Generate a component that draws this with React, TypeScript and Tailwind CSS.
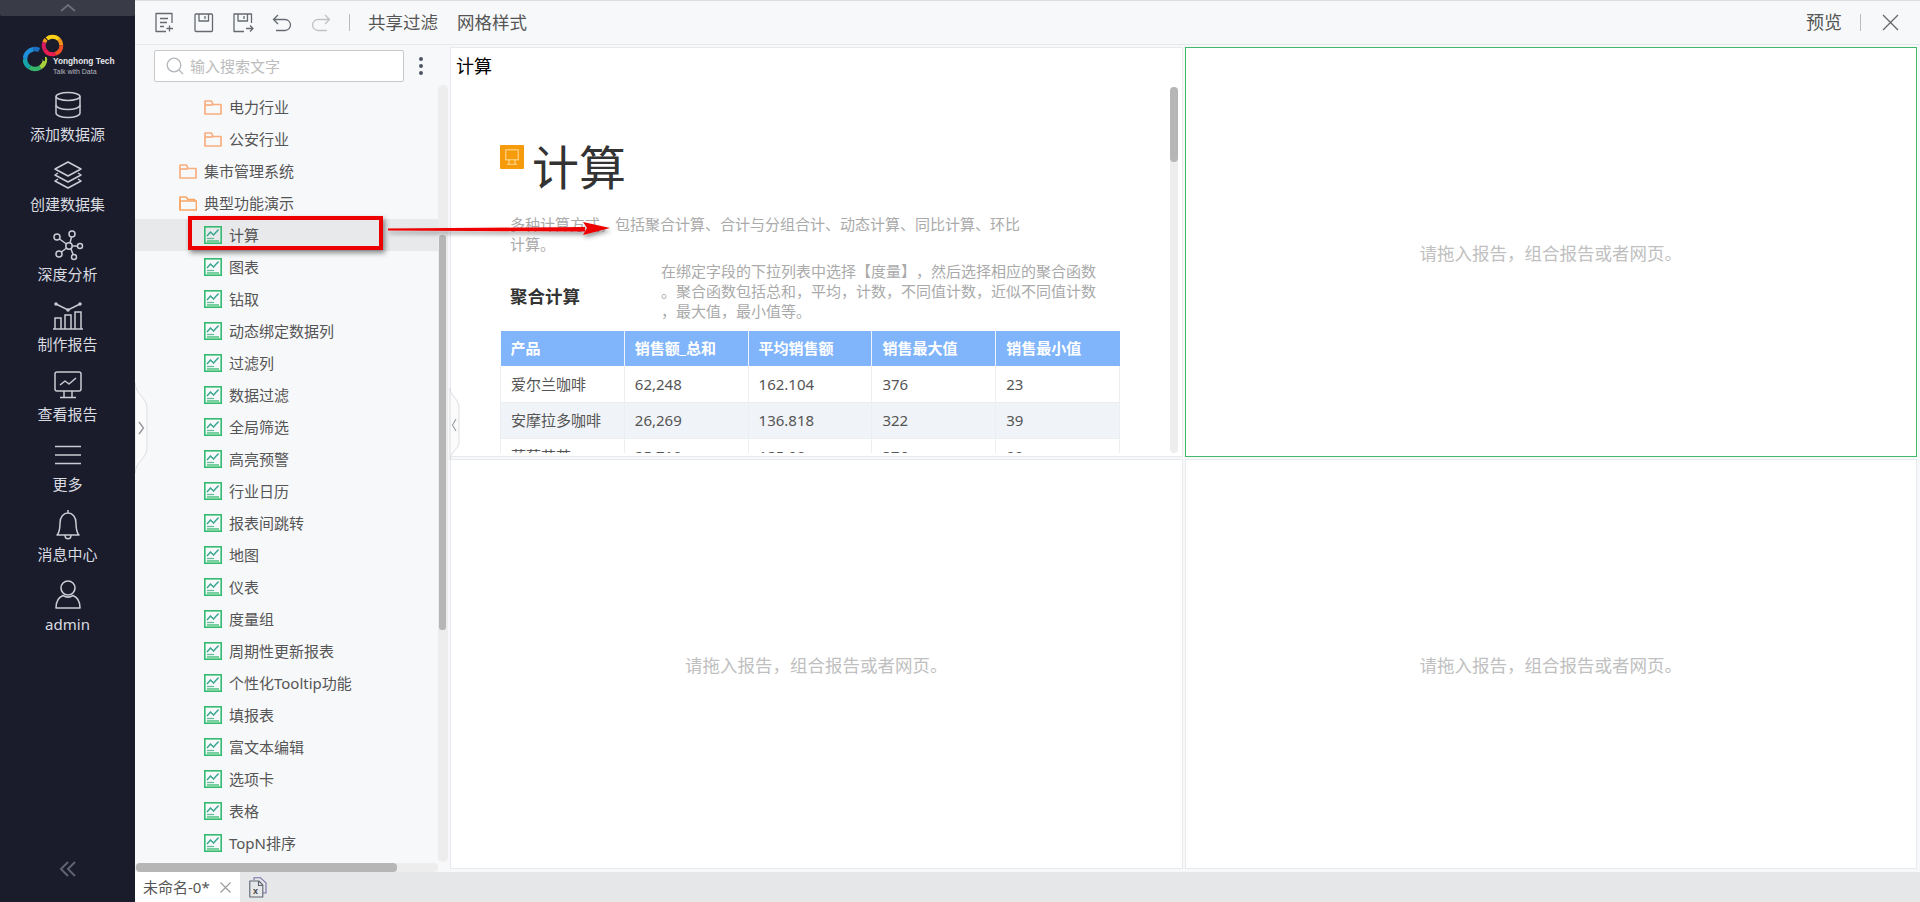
import React from "react";

const S = ({ w, h, children, className = "" }: { w: number; h: number; children: React.ReactNode; className?: string }) => (
  <svg width={w} height={h} viewBox={`0 0 ${w} ${h}`} fill="none" className={className}>
    {children}
  </svg>
);

const Logo = () => {
  const ring = (cx: number, cy: number, r: number, sw: number, segs: [string, number, number][]) =>
    segs.map(([c, start, len], i) => (
      <circle
        key={i}
        cx={cx}
        cy={cy}
        r={r}
        stroke={c}
        strokeWidth={sw}
        pathLength={100}
        strokeDasharray={`${len} ${100 - len}`}
        strokeDashoffset={-start}
      />
    ));
  return (
    <S w={42} h={40} className="shrink-0">
      {ring(12, 25, 10, 4.5, [
        ["#a6d13a", 0, 16],
        ["#35b56a", 16, 18],
        ["#16a5a8", 34, 16],
        ["#1e8fd8", 50, 22],
        ["#1c6fc0", 72, 10],
      ])}
      {ring(29.5, 11.5, 8.8, 4, [
        ["#f7941d", 88, 12],
        ["#f04e23", 0, 20],
        ["#ed1c4e", 20, 22],
        ["#d81b60", 42, 14],
        ["#f59a1c", 56, 6],
        ["#fbd016", 64, 24],
      ])}
    </S>
  );
};

const navStroke = "#c9ccd4";
const navIcons: Record<string, React.ReactNode> = {
  db: (
    <S w={34} h={34}>
      <g stroke={navStroke} strokeWidth="1.5">
        <ellipse cx="17" cy="8.500" rx="12" ry="4" />
        <path d="M5 8.500v16.500c0 2.500 5.400 4.500 12 4.500s12-2 12-4.500V8.500" />
        <path d="M5 17c0 2.500 5.400 4.500 12 4.500s12-2 12-4.500" />
      </g>
    </S>
  ),
  layers: (
    <S w={34} h={34}>
      <g stroke={navStroke} strokeWidth="1.5" strokeLinejoin="round">
        <path d="M17 4l13 7-13 7-13-7z" />
        <path d="M7 15l-3 2 13 7 13-7-3-2" />
        <path d="M7 21l-3 2 13 7 13-7-3-2" />
      </g>
    </S>
  ),
  graph: (
    <S w={34} h={34}>
      <g stroke={navStroke} strokeWidth="1.5">
        <circle cx="6" cy="9" r="3" />
        <circle cx="21" cy="6" r="3" />
        <circle cx="29" cy="18" r="2.5" />
        <circle cx="8" cy="26" r="3" />
        <circle cx="23" cy="29" r="2.5" />
        <circle cx="18" cy="18" r="3.2" />
        <path d="M8.5 11l7 5M20.5 9l-1.5 6M21.2 18h5.3M10.300 24l5.400-4M20 21l2.200 5.800" />
      </g>
    </S>
  ),
  report: (
    <S w={34} h={34}>
      <g stroke={navStroke} strokeWidth="1.5">
        <path d="M5 6l12 6 12-6" />
        <circle cx="5" cy="6" r="1" fill={navStroke} />
        <circle cx="17" cy="12" r="1" fill={navStroke} />
        <circle cx="29" cy="6" r="1" fill={navStroke} />
        <path d="M4 31V20h6v11M14 31V17h6v14M24 31V14h6v17M2 31h30" />
      </g>
    </S>
  ),
  monitor: (
    <S w={34} h={34}>
      <g stroke={navStroke} strokeWidth="1.5" strokeLinejoin="round">
        <rect x="4" y="4" width="26" height="19" rx="2" />
        <path d="M9 17l5-4 4 3 7-6" />
        <path d="M13 23v6M21 23v6M9 29.500h16" />
      </g>
    </S>
  ),
  menu: (
    <S w={34} h={34}>
      <g stroke={navStroke} strokeWidth="1.600">
        <path d="M4 8.500h26M4 17h26M4 25.500h26" />
      </g>
    </S>
  ),
  bell: (
    <S w={34} h={34}>
      <g stroke={navStroke} strokeWidth="1.5" strokeLinejoin="round">
        <path d="M17 2v3M6 27c2-2 3-5 3-12 0-6 3.500-10 8-10s8 4 8 10c0 7 1 10 3 12z" />
        <path d="M14 27c0 5 6 5 6 0" />
      </g>
    </S>
  ),
  user: (
    <S w={34} h={34}>
      <g stroke={navStroke} strokeWidth="1.600">
        <circle cx="17" cy="10" r="7" />
        <path d="M5 30c0-7 3-11 7-12.500 3 2 7 2 10 0 4 1.500 7 5.500 7 12.500z" strokeLinejoin="round" />
      </g>
    </S>
  ),
};

const navItems: [string, string][] = [
  ["db", "添加数据源"],
  ["layers", "创建数据集"],
  ["graph", "深度分析"],
  ["report", "制作报告"],
  ["monitor", "查看报告"],
  ["menu", "更多"],
  ["bell", "消息中心"],
  ["user", "admin"],
];

const Sidebar = () => (
  <aside className="w-[135px] shrink-0 h-full bg-[#1a1c2b] flex flex-col items-stretch">
    <div className="h-[16px] bg-[#393b47] rounded-b-[2px] flex items-center justify-center">
      <S w={16} h={8}>
        <path d="M1 7l7-6 7 6" stroke="#6d6f79" strokeWidth="1.800" />
      </S>
    </div>
    <div className="h-[68px] flex items-start pl-[23px] pt-[18px]">
      <Logo />
      <div className="-ml-[12px] mt-[22px] font-['Liberation_Sans',sans-serif]">
        <div className="text-[8.300px] leading-[11px] font-bold text-[#e8e8ec] whitespace-nowrap">Yonghong Tech</div>
        <div className="text-[7px] leading-[9px] text-[#b4b6be] whitespace-nowrap">Talk with Data</div>
      </div>
    </div>
    {navItems.map(([ic, label]) => (
      <div key={label} className="h-[70px] pt-[4px] flex flex-col items-center">
        <div className="h-[34px] flex items-center justify-center">{navIcons[ic]}</div>
        <div className="mt-[2px] h-[20px] leading-[20px] text-[15px] text-[#d9dbe0]">{label}</div>
      </div>
    ))}
    <div className="mt-auto pb-[24px] flex justify-center">
      <S w={18} h={18}>
        <path d="M9 2L2 9l7 7M16 2L9 9l7 7" stroke="#5f6271" strokeWidth="2" />
      </S>
    </div>
  </aside>
);

const tb = "#666a70";
const Toolbar = () => (
  <div className="h-[45px] shrink-0 border-t border-t-[#dcdde0] border-b border-b-[#e6e8ec] bg-[#f7f8fa] flex items-center pl-[20px] pr-[21px]">
    <S w={20} h={21}>
      <g stroke={tb} strokeWidth="1.300">
        <path d="M17 11V1.500H1v18h10" strokeLinejoin="round" />
        <path d="M5 6.500h8M5 10.500h7M5 14.500h4M14.500 13.500v6M11.500 16.500h6.500" />
      </g>
    </S>
    <div className="w-[19px]" />
    <S w={20} h={21}>
      <g stroke={tb} strokeWidth="1.300" strokeLinejoin="round">
        <rect x="1" y="2" width="17.500" height="17.500" rx="1" />
        <path d="M5 2v7h9.500V2M11 4v3" />
      </g>
    </S>
    <div className="w-[19px]" />
    <S w={21} h={21}>
      <g stroke={tb} strokeWidth="1.300" strokeLinejoin="round">
        <path d="M11 19.500H1V2h17.500v9" />
        <path d="M5 2v7h9.500V2M11 4v3M13 16.500h7M17 13.500l3 3-3 3" />
      </g>
    </S>
    <div className="w-[18px]" />
    <S w={20} h={20}>
      <path d="M6 2L1.500 6.500 6 11M1.500 6.500H13c3 0 5.500 2.500 5.500 5.500S16 17.500 13 17.500H4" stroke={tb} strokeWidth="1.300" />
    </S>
    <div className="w-[19px]" />
    <S w={20} h={20}>
      <path d="M14 2l4.500 4.500L14 11M18.500 6.500H7c-3 0-5.500 2.500-5.500 5.500S4 17.500 7 17.500h9" stroke="#bfc1c4" strokeWidth="1.300" />
    </S>
    <div className="w-[18px]" />
    <div className="w-px h-[17px] bg-[#b9bbbe]" />
    <span className="ml-[18px] text-[17.500px] text-[#555]">共享过滤</span>
    <span className="ml-[19px] text-[17.500px] text-[#555]">网格样式</span>
    <span className="ml-auto text-[18px] text-[#555]">预览</span>
    <div className="ml-[18px] w-px h-[17px] bg-[#b9bbbe]" />
    <div className="ml-[21px]">
      <S w={17} h={17}>
        <path d="M1 1l15 15M16 1L1 16" stroke="#666" strokeWidth="1.300" />
      </S>
    </div>
  </div>
);

const Folder = ({ open }: { open?: boolean }) => (
  <S w={18} h={15} className="shrink-0">
    {open ? (
      <g stroke="#f8a565" strokeWidth="1.700" strokeLinejoin="round">
        <path d="M1 14V1h6l2 2.500h6.500V5" />
        <path d="M1 5h16.500V14H1z" />
      </g>
    ) : (
      <g stroke="#f9ae80" strokeWidth="1.700" strokeLinejoin="round">
        <path d="M1 5V1h6.500l1.500 3.500h8V14H1z" />
        <path d="M1 5h8" />
      </g>
    )}
  </S>
);

const Chart = () => (
  <S w={18} h={18} className="shrink-0">
    <rect x="0.800" y="0.800" width="16.400" height="16.400" stroke="#35bb70" strokeWidth="1.600" />
    <path d="M3 10l3.500-4 3 3 5-5.500" stroke="#2fa58a" strokeWidth="1.300" />
    <path d="M3 12.500h7" stroke="#5fbb90" strokeWidth="1.200" />
    <path d="M3 15h12" stroke="#35bb70" strokeWidth="1.300" />
  </S>
);

const leaves = [
  "计算", "图表", "钻取", "动态绑定数据列", "过滤列", "数据过滤", "全局筛选", "高亮预警", "行业日历", "报表间跳转",
  "地图", "仪表", "度量组", "周期性更新报表", "个性化Tooltip功能", "填报表", "富文本编辑", "选项卡", "表格", "TopN排序",
];

const Row = ({ indent, icon, label, active }: { indent: number; icon: React.ReactNode; label: string; active?: boolean }) => (
  <div className={`h-[32px] flex items-center ${active ? "bg-[#e8e9eb]" : ""}`} style={{ paddingLeft: indent }}>
    {icon}
    <span className="ml-[7px] text-[15px] leading-[20px] text-[#555] whitespace-nowrap">{label}</span>
  </div>
);

const Tree = () => (
  <div className="w-[313px] shrink-0 h-full relative bg-[#f7f8fa]">
    <div className="flex items-center pl-[19px] pt-[5px] pb-[9px]">
      <div className="w-[250px] h-[32px] bg-white border border-[#c9c9c9] rounded-[2px] flex items-center pl-[11px]">
        <S w={18} h={18}>
          <circle cx="8" cy="8" r="6.800" stroke="#b3b7bb" strokeWidth="1.300" />
          <path d="M13 13l4 4" stroke="#b3b7bb" strokeWidth="1.300" />
        </S>
        <span className="ml-[6px] text-[15px] text-[#bcbcbc]">输入搜索文字</span>
      </div>
      <div className="ml-[15px] flex flex-col gap-[3px]">
        <div className="w-[4px] h-[4px] rounded-full bg-[#4d5565]" />
        <div className="w-[4px] h-[4px] rounded-full bg-[#4d5565]" />
        <div className="w-[4px] h-[4px] rounded-full bg-[#4d5565]" />
      </div>
    </div>
    <div className="w-[303px]">
      <Row indent={69} icon={<Folder />} label="电力行业" />
      <Row indent={69} icon={<Folder />} label="公安行业" />
      <Row indent={44} icon={<Folder />} label="集市管理系统" />
      <Row indent={44} icon={<Folder open />} label="典型功能演示" />
      {leaves.map((l, i) => (
        <Row key={l} indent={69} icon={<Chart />} label={l} active={i === 0} />
      ))}
    </div>
    {/* scrollbars */}
    <div className="absolute left-[303px] top-[40px] w-[10px] h-[777px] rounded-[5px] bg-[#ededee]">
      <div className="absolute left-[1px] top-[150px] w-[7px] h-[395px] rounded-[3px] bg-[#b6b6b6]" />
    </div>
    <div className="absolute left-0 top-[818px] w-[303px] h-[9px] rounded-[4px] bg-[#ededee]">
      <div className="absolute left-[1px] top-0 w-[261px] h-[9px] rounded-[4px] bg-[#b6b6b6]" />
    </div>
  </div>
);

const headers = ["产品", "销售额_总和", "平均销售额", "销售最大值", "销售最小值"];
const rows = [
  ["爱尔兰咖啡", "62,248", "162.104", "376", "23"],
  ["安摩拉多咖啡", "26,269", "136.818", "322", "39"],
  ["蓝莓花茶", "25,710", "185.00", "376", "90"],
];

const ReportPanel = () => (
  <div className="bg-white border border-[#e8eaee] flex flex-col min-h-0 min-w-0">
    <div className="h-[36px] shrink-0 pl-[5px] flex items-center text-[18px] text-black">计算</div>
    <div className="flex-1 min-h-0 mb-[3px] relative overflow-hidden">
      <div className="pl-[49px] pt-[53px]">
        <div className="flex items-start">
          <div className="w-[24px] h-[24px] mt-[8px] bg-[#f59b0c] rounded-[1px] flex items-center justify-center">
            <S w={14} h={16}>
              <g stroke="#ffd88f" strokeWidth="1.100">
                <rect x="0.800" y="0.800" width="12.400" height="10" />
                <path d="M4 11v4M10 11v4M2 15.200h10" />
              </g>
            </S>
          </div>
          <div className="ml-[8px] text-[47px] leading-[60px] text-[#333]">计算</div>
        </div>
        <div className="ml-[10px] mt-[17px] w-[512px] text-[15px] leading-[20px] text-[#aaa]">
          多种计算方式，包括聚合计算、合计与分组合计、动态计算、同比计算、环比计算。
        </div>
        <div className="mt-[7px] flex">
          <div className="ml-[10px] w-[151px] pt-[25px] text-[17.500px] leading-[20px] font-bold text-[#333]">聚合计算</div>
          <div className="whitespace-nowrap [text-spacing-trim:space-all] text-[15px] leading-[20px] text-[#aaa]">
            在绑定字段的下拉列表中选择【度量】，然后选择相应的聚合函数
            <br />
            。聚合函数包括总和，平均，计数，不同值计数，近似不同值计数
            <br />
            ，最大值，最小值等。
          </div>
        </div>
        <table className="mt-[10px] w-[620px] table-fixed border-collapse text-[15px]">
          <thead>
            <tr className="h-[35px] bg-[#80b4fb]">
              {headers.map((h) => (
                <th key={h} className="pl-[10px] text-left font-bold text-white border-r border-r-[#eef3fb] last:border-r-0">
                  {h}
                </th>
              ))}
            </tr>
          </thead>
          <tbody>
            {rows.map((r, i) => (
              <tr key={i} className={`h-[36px] ${i === 1 ? "bg-[#f0f3f7]" : "bg-white"}`}>
                {r.map((c, j) => (
                  <td key={j} className="pl-[10px] text-[#555] border border-[#eceef2] border-t-0">
                    {c}
                  </td>
                ))}
              </tr>
            ))}
          </tbody>
        </table>
      </div>
      <div className="absolute right-[4px] top-[3px] bottom-0 w-[8px] rounded-[4px] bg-[#ededee]">
        <div className="w-[8px] h-[75px] rounded-[4px] bg-[#b6b6b6]" />
      </div>
    </div>
  </div>
);

const Empty = ({ green }: { green?: boolean }) => (
  <div
    className={`bg-white border flex items-center justify-center pt-[3px] min-w-0 min-h-0 text-[17.500px] text-[#c0c0c0] ${
      green ? "border-[#41b86a]" : "border-[#e8eaee]"
    }`}
  >
    请拖入报告，组合报告或者网页。
  </div>
);

const Tabs = () => (
  <div className="h-[30px] shrink-0 bg-[#e6e7e9] flex items-stretch">
    <div className="w-[105px] bg-white flex items-center pl-[8px]">
      <span className="text-[15px] text-[#555]">未命名-0*</span>
      <span className="ml-[10px]">
        <S w={11} h={11}>
          <path d="M0.500 0.500l10 10M10.500 0.500l-10 10" stroke="#9a9a9a" strokeWidth="1.100" />
        </S>
      </span>
    </div>
    <div className="ml-[9px] flex items-center">
      <S w={18} h={21}>
        <g stroke="#5d6470" strokeWidth="1.100" strokeLinejoin="round">
          <path d="M5 3V0.800h6.500l5.500 5V16h-3" stroke="#7a6ca8" />
          <path d="M0.800 4h9l4 4v12H0.800z" />
          <path d="M9.500 4v4.500h4.300" />
        </g>
        <text x="4" y="17" fontSize="9" fontWeight="700" fill="#444" fontFamily="Liberation Sans">x</text>
      </S>
    </div>
  </div>
);

export default function App() {
  return (
    <div className="relative w-[1920px] h-[902px] overflow-hidden flex bg-[#f7f8fa] font-['Noto_Sans','Noto_Sans_CJK_SC',sans-serif]">
      <Sidebar />
      <div className="flex-1 min-w-0 flex flex-col">
        <Toolbar />
        <div className="flex-1 min-h-0 flex">
          <Tree />
          <div className="flex-1 min-w-0 grid grid-cols-2 grid-rows-2 gap-[2px] pl-[2px] pr-[3px] pt-[2px] pb-[3px]">
            <ReportPanel />
            <Empty green />
            <Empty />
            <Empty />
          </div>
        </div>
        <Tabs />
      </div>

      {/* collapse handles */}
      <svg className="absolute left-[135px] top-[383px]" width="14" height="90" viewBox="0 0 14 90" fill="none">
        <path d="M0 0c1 12 12 14 12 26v38C12 76 1 78 0 90z" fill="#fbfbfc" stroke="#dcdde0" />
        <path d="M4 39l4.500 6L4 51" stroke="#8f9296" strokeWidth="1.300" />
      </svg>
      <svg className="absolute left-[449px] top-[388px]" width="12" height="72" viewBox="0 0 12 72" fill="none">
        <path d="M1 0c1 10 9 10 9 20v34c0 8-8 8-9 18z" fill="#fbfbfc" stroke="#dcdde0" />
        <path d="M7 31l-3.500 6L7 43" stroke="#9a9da1" strokeWidth="1.100" />
      </svg>

      {/* annotation */}
      <div className="absolute left-[188px] top-[216px] w-[195px] h-[34px] border-[4px] border-[#ee0000] shadow-[2px_3px_5px_rgba(0,0,0,0.45)]" />
      <svg className="absolute left-[386px] top-[218px]" width="230" height="24" viewBox="0 0 230 24" fill="none">
        <defs>
          <filter id="sh" x="-5%" y="-50%" width="110%" height="220%">
            <feDropShadow dx="1" dy="3" stdDeviation="2" floodColor="#000" floodOpacity="0.4" />
          </filter>
        </defs>
        <g filter="url(#sh)">
          <path d="M2 11.500L198 12.500v-2.500z" fill="#ee0000" stroke="#ee0000" strokeWidth="2" />
          <path d="M197 4l27 6-27 7 4-7z" fill="#ee0000" />
        </g>
      </svg>
    </div>
  );
}
